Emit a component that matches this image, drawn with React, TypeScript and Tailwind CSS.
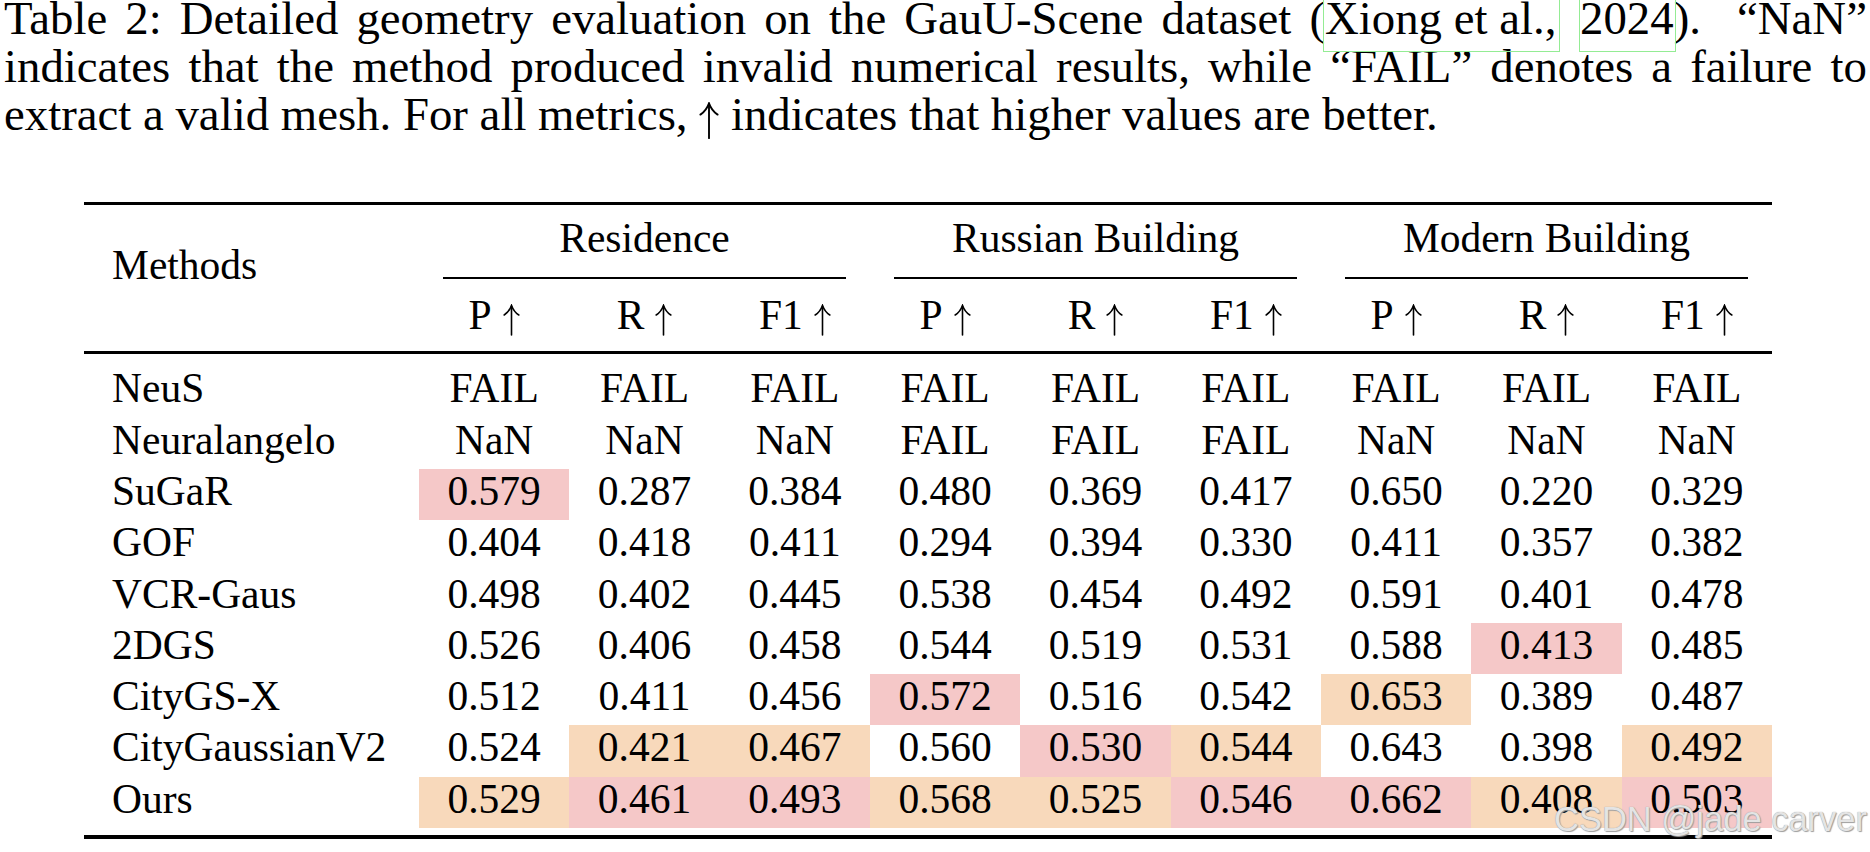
import React from "react";

type Cell = { v: string; h?: "p" | "o" };

const P = "p" as const;
const O = "o" as const;

const rows: { name: string; cells: Cell[] }[] = [
  { name: "NeuS", cells: Array.from({ length: 9 }, () => ({ v: "FAIL" })) },
  {
    name: "Neuralangelo",
    cells: ["NaN", "NaN", "NaN", "FAIL", "FAIL", "FAIL", "NaN", "NaN", "NaN"].map((v) => ({ v })),
  },
  {
    name: "SuGaR",
    cells: [
      { v: "0.579", h: P },
      { v: "0.287" },
      { v: "0.384" },
      { v: "0.480" },
      { v: "0.369" },
      { v: "0.417" },
      { v: "0.650" },
      { v: "0.220" },
      { v: "0.329" },
    ],
  },
  {
    name: "GOF",
    cells: ["0.404", "0.418", "0.411", "0.294", "0.394", "0.330", "0.411", "0.357", "0.382"].map((v) => ({ v })),
  },
  {
    name: "VCR-Gaus",
    cells: ["0.498", "0.402", "0.445", "0.538", "0.454", "0.492", "0.591", "0.401", "0.478"].map((v) => ({ v })),
  },
  {
    name: "2DGS",
    cells: [
      { v: "0.526" },
      { v: "0.406" },
      { v: "0.458" },
      { v: "0.544" },
      { v: "0.519" },
      { v: "0.531" },
      { v: "0.588" },
      { v: "0.413", h: P },
      { v: "0.485" },
    ],
  },
  {
    name: "CityGS-X",
    cells: [
      { v: "0.512" },
      { v: "0.411" },
      { v: "0.456" },
      { v: "0.572", h: P },
      { v: "0.516" },
      { v: "0.542" },
      { v: "0.653", h: O },
      { v: "0.389" },
      { v: "0.487" },
    ],
  },
  {
    name: "CityGaussianV2",
    cells: [
      { v: "0.524" },
      { v: "0.421", h: O },
      { v: "0.467", h: O },
      { v: "0.560" },
      { v: "0.530", h: P },
      { v: "0.544", h: O },
      { v: "0.643" },
      { v: "0.398" },
      { v: "0.492", h: O },
    ],
  },
  {
    name: "Ours",
    cells: [
      { v: "0.529", h: O },
      { v: "0.461", h: P },
      { v: "0.493", h: P },
      { v: "0.568", h: O },
      { v: "0.525", h: O },
      { v: "0.546", h: P },
      { v: "0.662", h: P },
      { v: "0.408", h: O },
      { v: "0.503", h: P },
    ],
  },
];

const groups = ["Residence", "Russian Building", "Modern Building"];
const subs = ["P", "R", "F1"];

function cellBg(h?: "p" | "o") {
  if (h === "p") return "bg-[#f5c8c8]";
  if (h === "o") return "bg-[#f8d9bb]";
  return "";
}

function UpArrow({ className }: { className?: string }) {
  return (
    <svg viewBox="0 0 17 31" className={className} fill="none" stroke="black" strokeWidth="1.6" strokeLinecap="round">
      <path d="M8.5 30.5 V1.5" />
      <path d="M1.2 10.5 C4.6 8.2 7 5 8.5 0.9 C10 5 12.4 8.2 15.8 10.5" />
    </svg>
  );
}

const line1 = ["Table", "2:", "Detailed", "geometry", "evaluation", "on", "the", "GauU-Scene", "dataset"];
const line2 =
  "indicates that the method produced invalid numerical results, while “FAIL” denotes a failure to".split(" ");

export default function App() {
  return (
    <div className="relative w-[1870px] h-[852px] overflow-hidden bg-white text-black font-['Liberation_Serif','Times_New_Roman',serif]">
      {/* Caption */}
      <div className="pl-[4px] w-[1867px] text-[46.8px]">
        <div className="h-[48px] leading-[37px] flex justify-between whitespace-nowrap">
          {line1.map((w, i) => (
            <span key={i}>{w}</span>
          ))}
          <span>
            (
            <span className="relative">
              Xiong et al.,
              <span className="absolute left-[-2px] right-[-4px] top-[-8px] bottom-[-8px] border border-[#94ec94]" />
            </span>{" "}
            <span className="relative ml-[12px]">
              2024
              <span className="absolute left-[-1px] right-[-2px] top-[-8px] bottom-[-8px] border border-[#94ec94]" />
            </span>
            ).
          </span>
          <span className="ml-[18px]">“NaN”</span>
        </div>
        <div className="h-[48px] leading-[37px] flex justify-between whitespace-nowrap">
          {line2.map((w, i) => (
            <span key={i}>{w}</span>
          ))}
        </div>
        <div className="h-[48px] leading-[37px] whitespace-nowrap">
          extract a valid mesh. For all metrics,{" "}
          <UpArrow className="inline-block w-[20px] h-[37px] align-[-9px]" /> indicates that higher values are
          better.
        </div>
      </div>

      {/* Table */}
      <div className="ml-[84px] mt-[58px] w-[1688px] text-[41.5px]">
        <div className="h-[3px] bg-black" />
        {/* Header */}
        <div className="flex">
          <div className="w-[335px] shrink-0 pl-[28px] pt-[38px] leading-[45px]">Methods</div>
          <div className="flex-1 flex flex-col">
            <div className="grid grid-cols-3">
              {groups.map((g) => (
                <div key={g} className="flex flex-col">
                  <div className="h-[72px] pt-[11px] leading-[45px] text-center">{g}</div>
                  <div className="mx-[24px] h-[1.5px] bg-black" />
                </div>
              ))}
            </div>
            <div className="grid grid-cols-9 h-[72.5px]">
              {groups.flatMap((g) =>
                subs.map((s) => (
                  <div key={g + s} className="pt-[14px] leading-[45px] text-center whitespace-nowrap">
                    {s}
                    <UpArrow className="inline-block ml-[11px] w-[17px] h-[32px] align-[-7px]" />
                  </div>
                ))
              )}
            </div>
          </div>
        </div>
        <div className="h-[3px] bg-black" />
        {/* Body */}
        <div className="mt-[12.4px] grid grid-cols-[335px_repeat(9,minmax(0,1fr))]">
          {rows.map((r) => (
            <React.Fragment key={r.name}>
              <div className="h-[51.3px] pl-[28px] leading-[45px] whitespace-nowrap">{r.name}</div>
              {r.cells.map((c, i) => (
                <div key={i} className={`h-[51.3px] leading-[45px] text-center ${cellBg(c.h)}`}>
                  {c.v}
                </div>
              ))}
            </React.Fragment>
          ))}
        </div>
        <div className="mt-[7.4px] h-[4px] bg-black" />
      </div>

      {/* Watermark */}
      <div className="absolute left-[1554px] top-[802px] text-[34.5px] leading-[34px] whitespace-nowrap font-['Liberation_Sans',Arial,sans-serif] text-[#e4e4e4] [text-shadow:0_0_1px_#8a8a8a,1px_1px_1px_#a0a0a0]">
        CSDN @jade carver
      </div>
    </div>
  );
}
